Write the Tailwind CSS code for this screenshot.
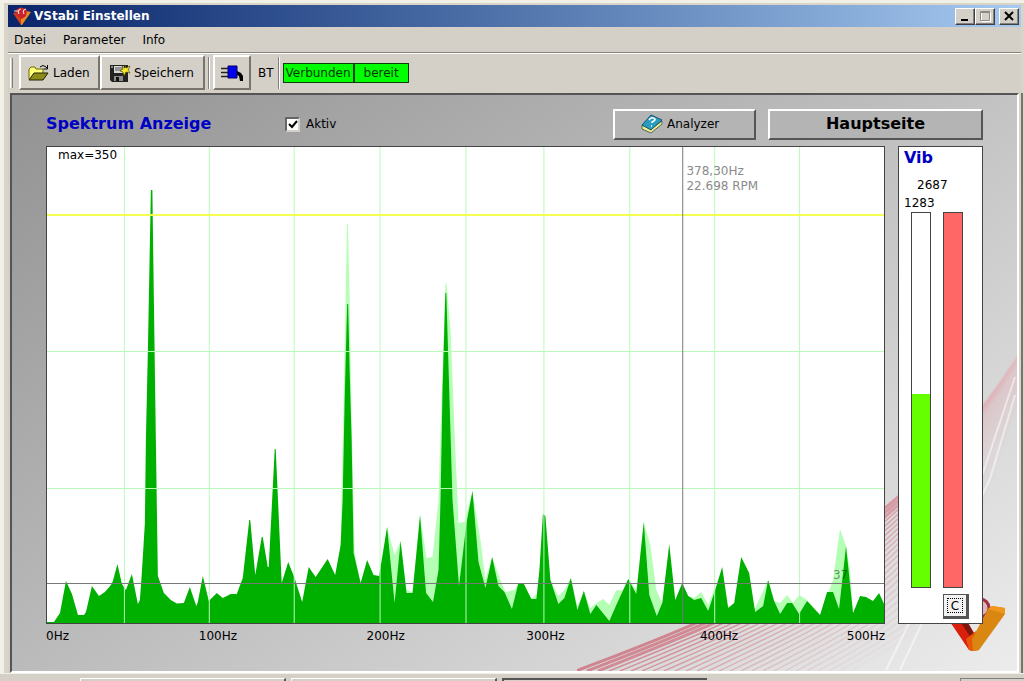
<!DOCTYPE html>
<html lang="de">
<head>
  <meta charset="UTF-8" />
  <meta name="viewport" content="width=device-width, initial-scale=1.0"/>
  <title>VStabi Einstellen</title>
  <script src="https://cdn.jsdelivr.net/npm/@tailwindcss/browser@4"></script>
</head>
<body class="h-screen overflow-hidden flex flex-col bg-[#d4d0c8] font-['DejaVu_Sans','Liberation_Sans',sans-serif] text-xs text-black">

  <!-- Window -->
  <div class="flex-1 min-h-0 flex flex-col border-t-3 border-l-4 border-[#f1f0e6]">
    <div class="flex-1 min-h-0 flex flex-col border-t-2 border-l-4 border-r-3 border-[#d8d4ca]">

      <!-- Title bar -->
      <header class="h-[22px] shrink-0 flex items-center pl-1 pr-[2px] bg-linear-to-r from-[#0a246a] to-[#a6caf0]">
        <svg class="w-[20px] h-[20px] shrink-0" viewBox="0 0 20 20">
          <path d="M1 7l5-1 5 7-2 6z" fill="#d23a1c"/>
          <path d="M19 6l-5-1-5 8v6h1z" fill="#e88a20"/>
          <path d="M4 4q5-5 11 0l-1 6-4 3-5-4z" fill="#c8242a"/>
          <path d="M9 3q-4 1-2 5M14 3q-4 1-2 5M2 5h4" fill="none" stroke="#fbd5d0" stroke-width="1.2"/>
        </svg>
        <h1 class="flex-1 pl-[2px] text-xs font-bold text-white">VStabi Einstellen</h1>
        <button aria-label="Minimieren" class="w-[20px] h-[17px] bg-[#d4d0c8] border border-t-white border-l-white border-b-[#404040] border-r-[#404040] shadow-[inset_-1px_-1px_0_#808080]">
          <svg class="w-[18px] h-[15px]" viewBox="0 0 18 15"><path d="M5 10h7v2H5z"/></svg>
        </button>
        <button aria-label="Maximieren" disabled class="w-[20px] h-[17px] bg-[#d4d0c8] border border-t-white border-l-white border-b-[#404040] border-r-[#404040] shadow-[inset_-1px_-1px_0_#808080]">
          <svg class="w-[18px] h-[15px]" viewBox="0 0 18 15" fill="none"><path d="M5.500 3.500h9v9h-9z" stroke="#fff"/><path d="M4.500 2.500h9v9h-9zM4 3.500h10" stroke="#8c8984"/></svg>
        </button>
        <button aria-label="Schließen" class="ml-1 w-[20px] h-[17px] bg-[#d4d0c8] border border-t-white border-l-white border-b-[#404040] border-r-[#404040] shadow-[inset_-1px_-1px_0_#808080]">
          <svg class="w-[18px] h-[15px]" viewBox="0 0 18 15"><path d="M5 3l8 8M13 3l-8 8" stroke="#000" stroke-width="2"/></svg>
        </button>
      </header>

      <!-- Menu -->
      <nav class="h-[26px] shrink-0 flex items-center gap-[17px] pl-[6px] border-b border-[#86837d]">
        <button>Datei</button>
        <button>Parameter</button>
        <button>Info</button>
      </nav>

      <!-- Toolbar -->
      <div class="h-[38px] shrink-0 flex items-center pl-[2px] border-t border-white">
        <span class="w-[3px] h-[30px] mr-[6px] border-l border-white border-r border-r-[#808080]"></span>
        <button class="w-[81px] h-[35px] flex items-center gap-[3px] pl-[7px] border-2 border-t-white border-l-white border-b-[#77746e] border-r-[#77746e]">
          <svg class="w-[22px] h-[18px]" viewBox="0 0 22 18">
            <path d="M1 15V5l2-2h4l1 2h7v4" fill="#ffff7a" stroke="#6b6b00"/>
            <path d="M1 16l5-7h14l-5 7z" fill="#8c8c1a" stroke="#222200"/>
            <path d="M12 3q3-3 6 0l1 1M19.500 1v4h-4" fill="none" stroke="#000"/>
          </svg>
          Laden
        </button>
        <button class="w-[105px] h-[35px] flex items-center gap-[3px] pl-[7px] border-2 border-t-white border-l-white border-b-[#77746e] border-r-[#77746e]">
          <svg class="w-[22px] h-[20px]" viewBox="0 0 22 20">
            <path d="M1 2h18v17H3l-2-2z" fill="#222"/>
            <path d="M5 3h10v7H5z" fill="#d8d8d8"/>
            <path d="M6 5h8M6 7h8" stroke="#555"/>
            <path d="M2 3h2v2H2zM5 13h9v5H5z" fill="#8d8d8d"/>
            <path d="M7 14h3v4H7z" fill="#111"/>
            <path d="M16 2l1 3 4-2-2 4 2 3-4-1-2 4-1-4-3-1 3-2-1-3 3 2z" fill="#f5e92a" stroke="#3d3900" stroke-width=".6"/>
          </svg>
          Speichern
        </button>
        <span class="w-[2px] h-[32px] mx-[3px] border-l border-[#808080] border-r border-r-white"></span>
        <button aria-label="Verbindung" class="w-[38px] h-[35px] flex items-center justify-center border-2 border-t-white border-l-white border-b-[#77746e] border-r-[#77746e]">
          <svg class="w-[24px] h-[18px]" viewBox="0 0 24 18">
            <path d="M1 4.500h7M1 8.500h7M1 12.500h7" stroke="#222" stroke-width="1.500"/>
            <path d="M8 2h9v12H8z" fill="#0000f0" stroke="#00005c"/>
            <path d="M17 7l4 2 2 3v5h-3l-1-5-2-1z" fill="#000"/>
          </svg>
        </button>
        <span class="pl-[7px] pr-1">BT</span>
        <span class="w-[2px] h-[32px] mr-[3px] border-l border-[#808080] border-r border-r-white"></span>
        <div class="flex h-[20px] leading-[18px] text-center text-[#073607]">
          <span class="w-[71px] bg-[#00ff00] border border-[#0b3d0b]">Verbunden</span>
          <span class="w-[55px] bg-[#00ff00] border border-[#0b3d0b]">bereit</span>
        </div>
      </div>

      <!-- Main panel -->
      <main class="relative flex-1 min-h-0 flex flex-col mt-[2px] ml-[2px] mr-[2px] pl-[34px] pr-[34px] pt-[14px] pb-[24px] border-2 border-t-[#555] border-l-[#555] border-r-white border-b-white shadow-[2px_0_0_#d8d4ca,4px_0_0_#77746e] bg-linear-[145deg] from-[#929292] via-[#bfbfbf] via-50% to-[#ececec]">
        <svg class="absolute right-0 bottom-0 w-[440px] h-[320px]" viewBox="577 352 440 320">
          <defs>
            <linearGradient id="fade" gradientUnits="userSpaceOnUse" x1="700" y1="0" x2="1017" y2="0">
              <stop offset="0" stop-color="#c8324a"/>
              <stop offset=".6" stop-color="#d0566a"/>
              <stop offset="1" stop-color="#e8a8b0" stop-opacity=".6"/>
            </linearGradient>
          </defs>
          <g id="rays" fill="none" stroke="url(#fade)"></g>
          <path d="M886 671L983 474 1015 378M900 671L990 480 1015 396" fill="none" stroke="#fff" stroke-opacity=".5" stroke-width="2"/>
          <circle cx="980" cy="609" r="9" fill="#dfb6b8" stroke="#a03040" stroke-width="3"/>
          <path d="M940 608h15l20 28-2 16-4-1z" fill="#d8200c"/>
          <path d="M952 610h8l14 24-1 8z" fill="#7e160e"/>
          <path d="M966 640l10-8 3 19-5 1-5-1z" fill="#e8560c"/>
          <path d="M988 610l4-3 13 2v6l-26 36-6 1-1-12z" fill="#d98612"/>
          <path d="M988 610l4-3 13 2v6z" fill="#f0981c"/>
        </svg>

        <div class="relative h-[30px] shrink-0 flex items-center">
          <h2 class="w-[239px] text-base font-bold text-[#0000c4]">Spektrum Anzeige</h2>
          <label class="flex-1 flex items-center gap-[6px]">
            <span class="relative flex">
              <input type="checkbox" checked class="appearance-none w-[15px] h-[15px] bg-white border-2 border-t-[#666] border-l-[#666] border-b-[#d4d0c8] border-r-[#d4d0c8]"/>
              <svg class="absolute inset-0 w-[15px] h-[15px]" viewBox="0 0 15 15"><path d="M4 7l3 3 5-6" fill="none" stroke="#000" stroke-width="2"/></svg>
            </span>
            Aktiv
          </label>
          <button class="w-[143px] h-[31px] flex items-center gap-1 pl-[26px] bg-[#b4b4b4] border-2 border-t-white border-l-white border-b-[#555] border-r-[#555]">
            <svg class="w-[22px] h-[20px]" viewBox="0 0 22 20">
              <path d="M1 11l9 4 11-8v3l-11 9-9-4z" fill="#f4ec8a" stroke="#4d6a58"/>
              <path d="M1 11L10 1l11 5-11 10z" fill="#2a9cc0" stroke="#14566e"/>
              <path d="M8 6q3-4 6-1 0 2-3 3v1M10 12h1" fill="none" stroke="#fff" stroke-width="1.600"/>
            </svg>
            Analyzer
          </button>
          <button class="ml-3 w-[215px] h-[31px] bg-[#b4b4b4] border-2 border-t-white border-l-white border-b-[#555] border-r-[#555] text-base leading-none font-bold">Hauptseite</button>
        </div>

        <div class="relative flex-1 min-h-0 flex gap-[13px] pt-[7px]">
          <!-- Spectrum -->
          <section class="flex-1 min-w-0 flex flex-col">
            <div class="relative flex-1 min-h-0 bg-white border border-[#444]">
              <svg class="absolute inset-0 w-full h-full" viewBox="46 147 838 476" preserveAspectRatio="none">
                <path fill="#b4ffb4" d="M340 623V545L345 300 346.300 224H347.300L349 300 351 420 354 553 360 583 380 576 386.500 527 394 555 400 541 406 590 412 592 419.500 515 426 558 432 557 438 500 441 400 445 283 446 283 450 330 454 430 458 523 464 522 472 491 480 540 485 580 491.700 557 500 580 505 592 514 590 518 583 531 599 550 580 558 596 564 590 570.500 578 577 606 583.500 591 590 608 596 603 603 599 609 605 616 590 622 591 628 579 636 590 643.500 522 650 545 656 590 662 603 675 600 688 596 694 598 701 592 708 605 714 589 728 606 755 608 768 580 774 601 780 603 787 595 793 603 799 595 807 600 820 615 833 580 837 550 840 529 846 546 850 570 853 613V623z"/>
                <path fill="#00b000" d="M46 623V622H53L59 613 65 581 71 594 77 615H83L85 612 91 586 98 596 104 592 110 585 112 581 116.500 564 121 584 125 590 131 574 137 604 139 600 141 572 144 523 145 440 147 350 150 190H151.500L153 300 155 440 157 576 163 593 170 600 176 603.500 183 603 189 587 195.500 606 197 602 202 576 208 601 216 593 222 598 230 594H236L242 578 248.500 520H249.500L254.500 575 261 537H262L267 567 268 567 274 449H275L281 583 287.500 562 293.500 577 301.500 602 308 567 315 577 327 559 334.500 575 340 545 342 500 344 400 346.500 304H347.500L349 370 351 440 353 553 360 583 366.500 560 373 575 378.500 576 386.500 527 394 603 400 541 406 593H412L419.500 515 425.500 593 432.500 602 438 570 440 500 442 390 444.800 293H445.800L449 400 452 500 458.500 586 466 523 472 491 478 562 485 588 491.700 557 498 586 504 592 511.500 609 518 583H523L531 599H536L539 570 542.500 514 545 516 550 580 558 604 564 598 570.500 578 577 610 583.500 591 590 614 596 605 609 621 616 605 628 579 636 594 643.500 522 649 595 656.500 616 662 603 669 544 675 600 682 583 688 596 694 600 701 598 708 611 714 593 722 567 728 608 734 603 741 557 749 573 755 612 763 606 768 580 774 601 780 614 787 603H792L799 614 807 601 820 615 827 592H833L839 609 846 546 853 613 860 596 866 597 873 601 879 593 885 606V623z"/>
                <g fill="none" shape-rendering="crispEdges">
                  <path stroke="#b8fbb8" d="M123.500 146V623M208.500 146V623M293.500 146V623M379.500 146V623M465.500 146V623M543.500 146V623M629.500 146V623M714.500 146V623M799.500 146V623M46 351.500H885M46 488.500H885"/>
                  <path stroke="#f4ff50" stroke-width="2" d="M46 215H885"/>
                  <path stroke="#777" d="M46 583.500H885M682.500 146V623"/>
                </g>
              </svg>
              <span class="absolute left-[11px] top-0">max=350</span>
              <p class="absolute left-[76.400%] top-[17px] leading-[15px] text-[#8a8a8a]">378,30Hz<br/>22.698 RPM</p>
              <span class="absolute left-[93.900%] top-[88.200%] text-black/45">37</span>
            </div>
            <div class="h-[23px] shrink-0 pt-[4px] grid grid-cols-[154fr_169fr_161fr_175fr_148fr_33fr]">
              <span>0Hz</span><span>100Hz</span><span>200Hz</span><span>300Hz</span><span>400Hz</span><span>500Hz</span>
            </div>
          </section>

          <!-- Vibration level -->
          <aside class="w-[85px] shrink-0 mb-[23px] flex flex-col bg-white border border-[#444] px-[5px] pb-[4px]">
            <h2 class="text-base leading-[22px] font-bold text-[#0000c4]">Vib</h2>
            <span class="pt-[7px] pl-[13px] leading-[18px]">2687</span>
            <span class="leading-[18px]">1283</span>
            <div class="flex-1 min-h-0 flex gap-[12px] pl-[7px]">
              <div class="w-[20px] h-full flex flex-col justify-end border border-[#444]">
                <div class="bg-[#66ff00]" style="height: 51.500%"></div>
              </div>
              <div class="w-[20px] h-full bg-[#ff6666] border border-[#444]"></div>
            </div>
            <button aria-label="Zurücksetzen" class="mt-[6px] ml-[39px] w-[26px] h-[25px] p-[3px] bg-[#f2f2f2] border border-r-3 border-b-3 border-[#555]">
              <span class="block h-full border border-dotted border-black leading-[15px]">C</span>
            </button>
          </aside>
        </div>
      </main>
    </div>
  </div>

  <!-- Taskbar -->
  <footer class="h-[8px] shrink-0 flex gap-[5px] pt-[4px] pl-[80px] border-t border-[#f1f0e6]">
    <div class="w-[206px] border-t border-l border-white border-r-2 border-r-[#555]"></div>
    <div class="w-[206px] border-t border-l border-white border-r-2 border-r-[#555]"></div>
    <div class="w-[205px] border-t-2 border-l-2 border-[#555]"></div>
    <div class="ml-auto w-[64px] border-t border-l border-[#808080]"></div>
  </footer>

  <script>
    // Red rays sweeping up to the right edge, fading out as they spread
    const rays = document.getElementById('rays');
    for (let i = 0; i < 26; i++) {
      const path = document.createElementNS('http://www.w3.org/2000/svg', 'path');
      const x = 576 + i * 11;
      path.setAttribute('d', `M${x} 672C${x + 130} ${622 - i} ${890 + i * 2} ${560 + i * 2} 1020 ${354 + i * 2}`);
      path.setAttribute('stroke-width', i < 3 ? 3 : 1.5);
      path.setAttribute('stroke-opacity', 0.5 * (1 - i / 27));
      rays.appendChild(path);
    }
  </script>
</body>
</html>
